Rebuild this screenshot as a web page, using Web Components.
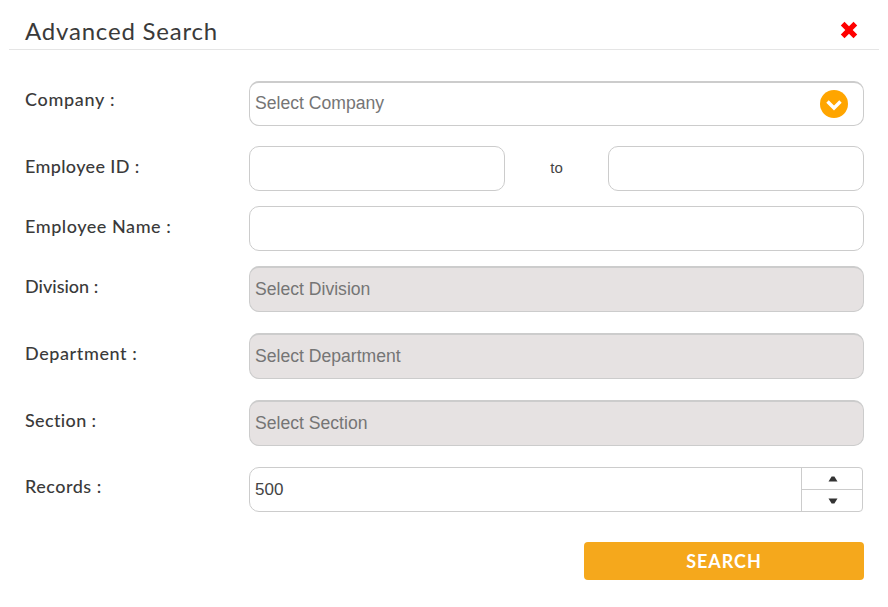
<!DOCTYPE html>
<html>
<head>
<meta charset="utf-8">
<title>Advanced Search</title>
<style>
    html, body { margin: 0; background: #fff; }
    body { font-family: Lato, sans-serif; color: #333; }
</style>
</head>
<body>

<search-panel>
    <form-row label="Company :" nudge="7" tracking=".7"><select-box placeholder="Select Company" arrow></select-box></form-row>
    <form-row label="Employee ID :" gap="20" tracking=".35">
        <div style="display:grid;grid-template-columns:256px 1fr 256px;align-items:center">
            <text-box></text-box>
            <span style="font:15px 'Liberation Sans',sans-serif;color:#444;text-align:center;padding-bottom:2px">to</span>
            <text-box></text-box>
        </div>
    </form-row>
    <form-row label="Employee Name :" gap="15" tracking=".55"><text-box></text-box></form-row>
    <form-row label="Division :" gap="15" tracking="0"><select-box placeholder="Select Division" disabled></select-box></form-row>
    <form-row label="Department :" gap="21"><select-box placeholder="Select Department" disabled></select-box></form-row>
    <form-row label="Section :" gap="21" tracking=".35"><select-box placeholder="Select Section" disabled></select-box></form-row>
    <form-row label="Records :" gap="21" nudge="8" tracking=".5"><number-box value="500"></number-box></form-row>
</search-panel>

<script>

/**
 * Outer dialog: title bar, slotted rows, search button.
 */
class SearchPanel extends HTMLElement
{
    constructor(...args)
    {
        super(...args);
        let shadow = this.attachShadow({mode: 'open'});
        shadow.innerHTML = `
            <style>
                :host { display: block; width: 888px; height: 607px; box-sizing: border-box; padding: 0 9px; overflow: hidden; }
                header {
                    display: flex; justify-content: space-between; align-items: center;
                    height: 49px; padding: 0 21px 0 16px;
                    border-bottom: 1px solid #e5e5e5;
                }
                h1 { margin: 0; padding-top: 12px; font: 400 24px/36px Lato, sans-serif; color: #3a3a3a; letter-spacing: .8px; }
                svg { display: block; margin-top: 11px; }
                main { padding: 31px 15px 0 16px; }
                footer { display: flex; justify-content: flex-end; padding: 30px 15px 0 0; }
                button {
                    width: 280px; height: 38px; border: 0; border-radius: 4px; padding: 0;
                    background: #f5a81c; color: #fff;
                    font: 700 18px Lato, sans-serif; letter-spacing: .95px;
                }
            </style>
            <header>
                <h1>Advanced Search</h1>
                <svg width="18" height="18" viewBox="0 0 18 18" aria-label="Close">
                    <path d="M4.500.800 9 5.300 13.500.800 17.200 4.500 12.700 9l4.500 4.500-3.700 3.700L9 12.700l-4.500 4.500-3.700-3.700L5.300 9 .800 4.500z" fill="#f00"/>
                </svg>
            </header>
            <main><slot></slot></main>
            <footer><button type="button">SEARCH</button></footer>
        `;
    }
}
customElements.define('search-panel', SearchPanel);


/**
 * Label on the left, control in the slot.
 * gap = space above the row, nudge = label offset from the top of the row,
 * tracking = letter spacing of the label.
 */
class FormRow extends HTMLElement
{
    constructor(...args)
    {
        super(...args);
        let shadow = this.attachShadow({mode: 'open'});
        shadow.innerHTML = `
            <style>
                :host { display: grid; grid-template-columns: 224px 615px; }
                label { font: 500 18px/22px Lato, sans-serif; color: #3a3a3a; letter-spacing: .6px; }
            </style>
            <label></label>
            <div><slot></slot></div>
        `;
    }

    connectedCallback()
    {
        let label = this.shadowRoot.querySelector('label');
        label.textContent = this.getAttribute('label');
        label.style.paddingTop = (this.getAttribute('nudge') || 9) + 'px';
        if(this.hasAttribute('tracking')) label.style.letterSpacing = this.getAttribute('tracking') + 'px';
        this.style.marginTop = (this.getAttribute('gap') || 0) + 'px';
    }
}
customElements.define('form-row', FormRow);


class TextBox extends HTMLElement
{
    constructor(...args)
    {
        super(...args);
        let shadow = this.attachShadow({mode: 'open'});
        shadow.innerHTML = `
            <style>
                :host { display: block; height: 45px; box-sizing: border-box; border: 1px solid #ccc; border-radius: 10px; background: #fff; }
            </style>
        `;
    }
}
customElements.define('text-box', TextBox);


class SelectBox extends HTMLElement
{
    constructor(...args)
    {
        super(...args);
        let shadow = this.attachShadow({mode: 'open'});
        shadow.innerHTML = `
            <style>
                :host {
                    display: flex; align-items: center; justify-content: space-between;
                    height: 45px; box-sizing: border-box; padding: 0 15px 1px 5px;
                    border: 1px solid #ccc; border-top: 2px solid #ccc; border-radius: 10px;
                    background: #fff; color: #757575;
                    font: 17.600px 'Liberation Sans', sans-serif;
                }
                :host([disabled]) { height: 46px; padding-bottom: 0; background: #e6e2e2; }
                svg { display: block; }
            </style>
            <span></span>
        `;
    }

    connectedCallback()
    {
        this.shadowRoot.querySelector('span').textContent = this.getAttribute('placeholder');
        if(this.hasAttribute('arrow'))
        {
            this.shadowRoot.querySelector('span').insertAdjacentHTML('afterend', `
                <svg width="28" height="28" viewBox="0 0 28 28">
                    <circle cx="14" cy="14" r="14" fill="#ffa500"/>
                    <path d="M7.500 11.500l6.500 6.500 6.500-6.500" fill="none" stroke="#fff" stroke-width="3.400"/>
                </svg>`);
        }
    }
}
customElements.define('select-box', SelectBox);


class NumberBox extends HTMLElement
{
    constructor(...args)
    {
        super(...args);
        let shadow = this.attachShadow({mode: 'open'});
        shadow.innerHTML = `
            <style>
                :host {
                    display: flex; width: 614px; height: 45px; box-sizing: border-box;
                    border: 1px solid #ccc; border-radius: 10px 4px 4px 10px; background: #fff;
                    font: 17px 'Liberation Sans', sans-serif; color: #444;
                }
                .value { flex: 1; display: flex; align-items: center; padding-left: 5px; }
                .spin { width: 60px; display: grid; grid-template-rows: 21px 1fr; border-left: 1px solid #ccc; }
                .spin div { display: flex; align-items: center; justify-content: center; padding-left: 1px; }
                .spin div + div { border-top: 1px solid #ccc; }
                svg { display: block; }
            </style>
            <span class="value"></span>
            <div class="spin">
                <div><svg width="10" height="6" viewBox="0 0 10 6"><path d="M3.600.500h2.800L9.500 5.500H.500z" fill="#333"/></svg></div>
                <div><svg width="10" height="6" viewBox="0 0 10 6"><path d="M.500.500h9L6.400 5.500H3.600z" fill="#333"/></svg></div>
            </div>
        `;
    }

    connectedCallback()
    {
        this.shadowRoot.querySelector('.value').textContent = this.getAttribute('value');
    }
}
customElements.define('number-box', NumberBox);

</script>
</body>
</html>
